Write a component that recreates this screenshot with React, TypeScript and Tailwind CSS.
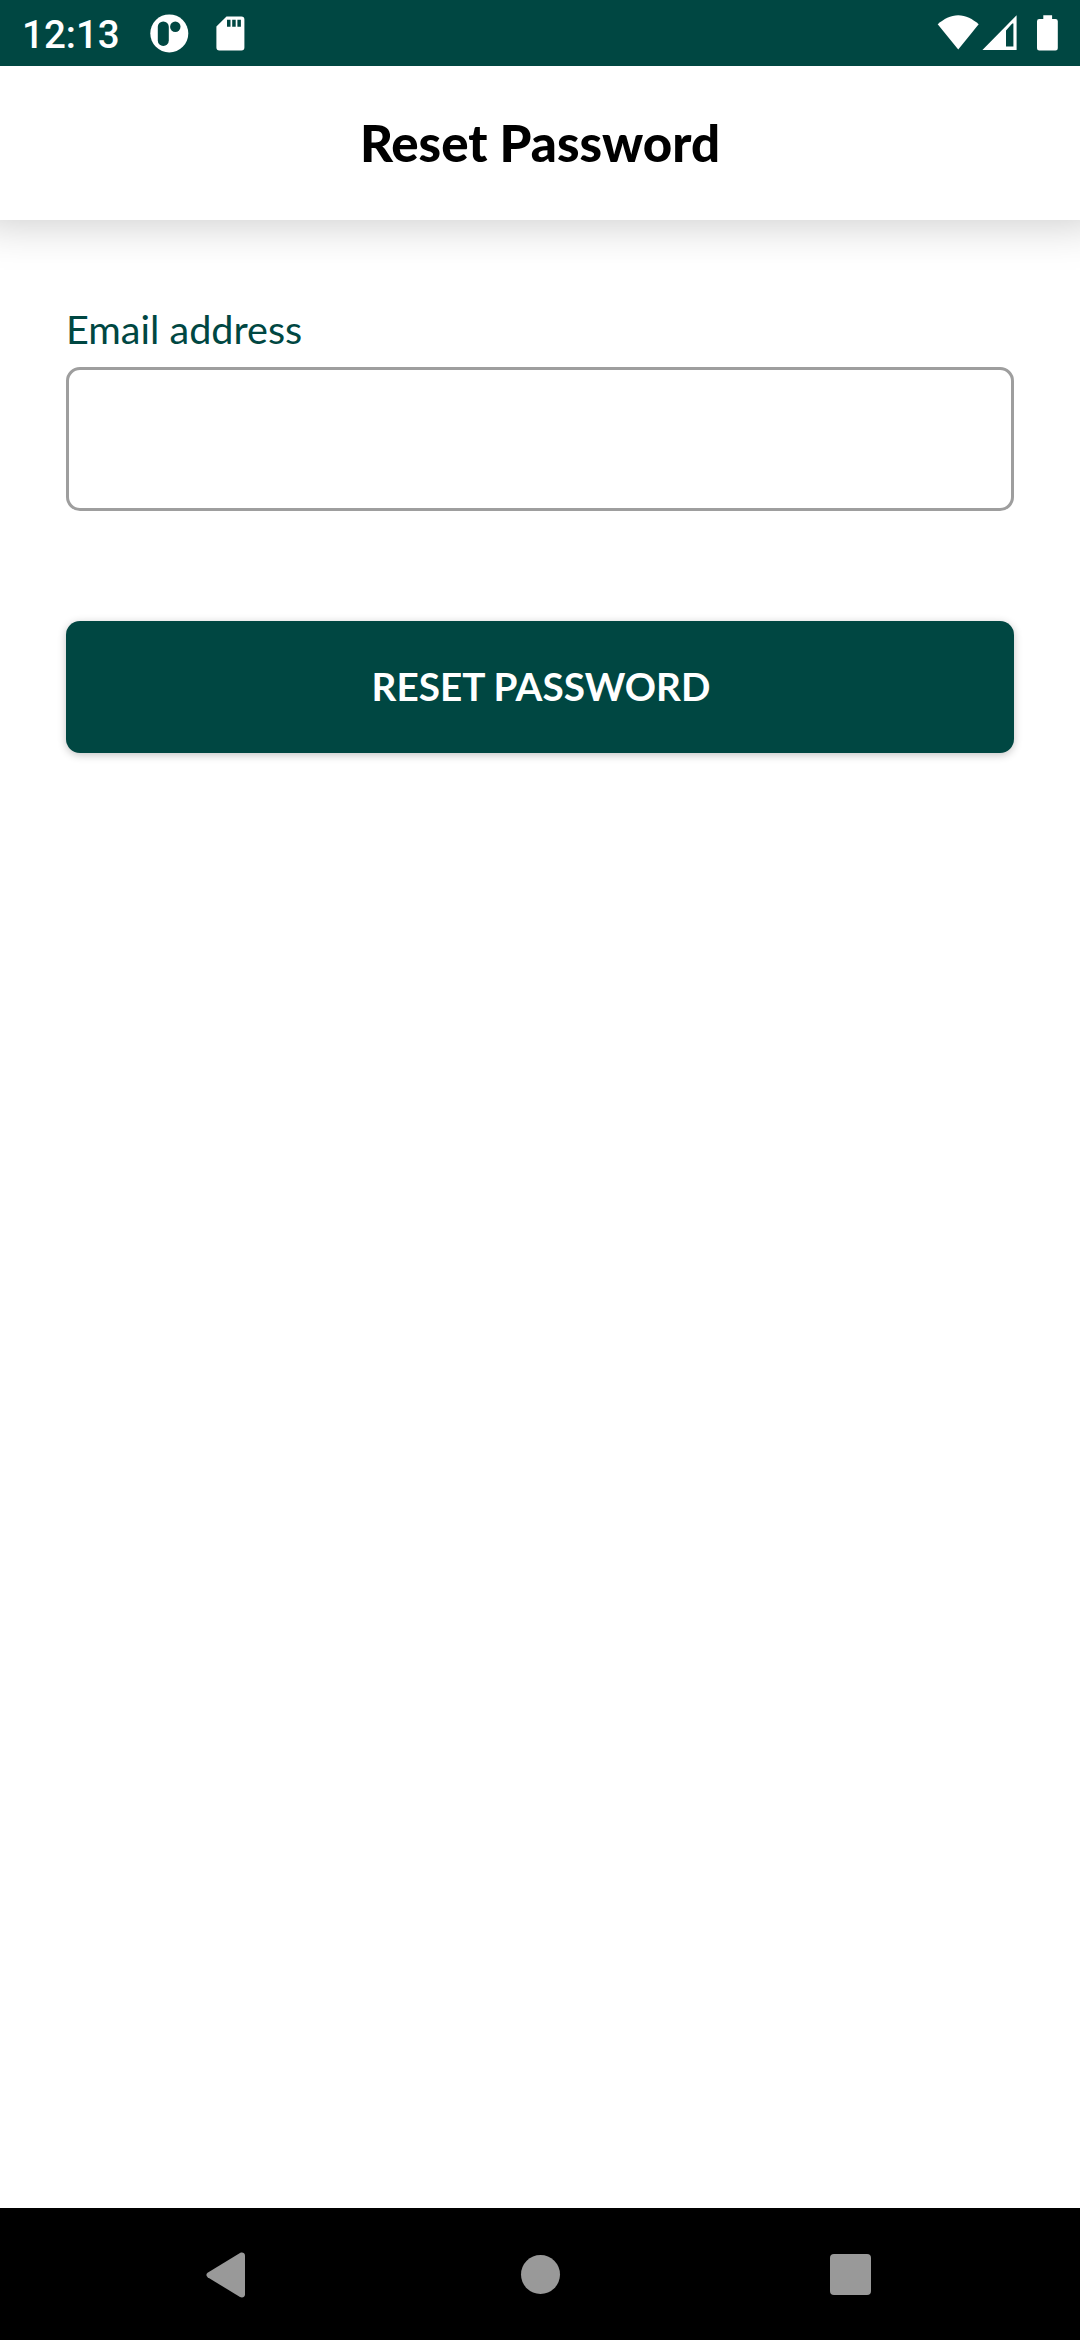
import React from "react";

function StatusBar() {
  return (
    <div className="relative z-10 flex h-[66px] shrink-0 items-center bg-[#004742] text-white">
      <span className="mt-[3px] ml-[22px] w-[98px] whitespace-nowrap font-['Roboto',sans-serif] text-[38.5px] font-medium leading-[44px]">
        12:13
      </span>
      <svg className="ml-[30px] size-[39px]" viewBox="0 0 39 39">
        <circle cx="19.3" cy="19.4" r="19" fill="#fff" />
        <rect x="7.8" y="7.4" width="11" height="24.5" rx="5.4" fill="#004742" />
        <circle cx="25.3" cy="12.7" r="5.2" fill="#004742" />
      </svg>
      <svg className="ml-[27px] h-[36px] w-[29px]" viewBox="0 -0.7 29 36">
        <path
          fill="#fff"
          fillRule="evenodd"
          d="M10.5 .7H25.4A3 3 0 0 1 28.4 3.7V31.8A3 3 0 0 1 25.4 34.8H3.4A3 3 0 0 1 .4 31.8V10.7ZM11 4V11H14.5V4ZM16.2 4V11H19.7V4ZM21.4 4V11H24.9V4Z"
        />
      </svg>
      <div className="flex-1" />
      <svg className="h-[36px] w-[42px]" viewBox="-0.7 0.4 42 36">
        <path fill="#fff" d="M20.500 35 0 9.600C6 4.400 13 .6 20.500 .6S35 4.400 41 9.600Z" />
      </svg>
      <svg className="ml-[3px] h-[36px] w-[35px]" viewBox="0 0 35 36">
        <path fill="#fff" fillRule="evenodd" d="M34.6.3V35H.4ZM24 15.500V31.400H31.400V8.600H30.200Z" />
      </svg>
      <svg className="mr-[22px] ml-[20px] h-[36px] w-[21px]" viewBox="0 0 21 36">
        <path
          fill="#fff"
          d="M6.300.2H15.100V4H18.500A2.300 2.300 0 0 1 20.800 6.300V33.300A2.300 2.300 0 0 1 18.500 35.600H2.300A2.300 2.300 0 0 1 0 33.300V6.300A2.300 2.300 0 0 1 2.300 4H6.300Z"
        />
      </svg>
    </div>
  );
}

function NavigationBar() {
  return (
    <div className="flex h-[132px] shrink-0 items-center bg-black">
      <svg className="mt-px ml-[206px] h-[46px] w-[39px]" viewBox="0 0 39 46">
        <path
          fill="#999"
          d="M1.600 20.800 34 1C36.300-.2 39 1 39 3.500V42.500C39 45 36.300 46.200 34 45L1.600 25.200Q-.9 23 1.600 20.800Z"
        />
      </svg>
      <div className="mt-px ml-[276px] size-[39px] rounded-full bg-[#999]" />
      <div className="mt-px ml-[270px] size-[41px] rounded-[4px] bg-[#999]" />
    </div>
  );
}

export default function App() {
  return (
    <div className="flex h-[2340px] w-[1080px] flex-col overflow-hidden bg-white font-['Lato',sans-serif]">
      <StatusBar />
      <header className="flex h-[154px] shrink-0 items-center justify-center bg-white pb-px shadow-[0_-20px_44px_22px_rgba(0,0,0,0.22)]">
        <h1 className="text-[51px] font-black leading-[62px] text-black">Reset Password</h1>
      </header>
      <main className="flex flex-1 flex-col px-[66px] pt-[85px]">
        <label htmlFor="email" className="h-[62px] text-[39.6px] leading-[48px] text-[#004742]">
          Email address
        </label>
        <input
          id="email"
          type="email"
          className="h-[144px] rounded-[14px] border-[3px] border-[#9e9e9e] bg-white px-6 text-[39.6px] outline-none"
        />
        <button
          type="button"
          className="mt-[110px] h-[132px] rounded-[14px] bg-[#004742] pb-0.5 pl-0.5 text-[38.7px] font-bold text-white shadow-[0_2px_9px_rgba(0,0,0,0.24)]"
        >
          RESET PASSWORD
        </button>
      </main>
      <NavigationBar />
    </div>
  );
}
